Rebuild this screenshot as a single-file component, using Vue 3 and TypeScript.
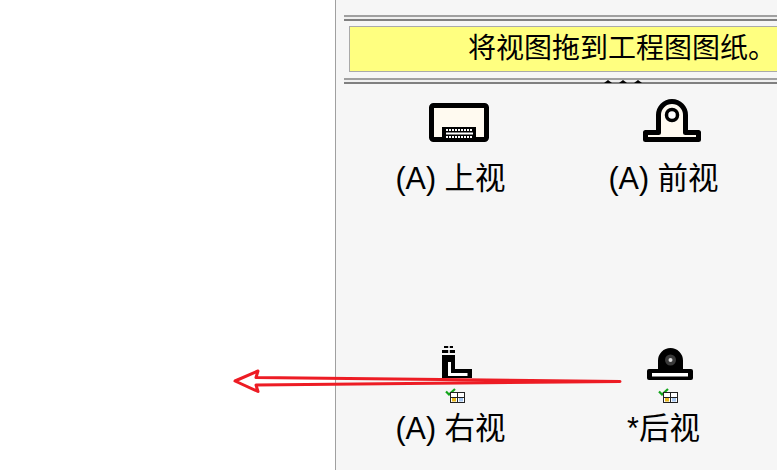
<script setup lang="ts">
interface ViewItem {
  label: string
  kind: 'top' | 'front' | 'right' | 'back'
  used: boolean
}

const views: ViewItem[] = [
  { label: '(A) 上视', kind: 'top', used: false },
  { label: '(A) 前视', kind: 'front', used: false },
  { label: '(A) 右视', kind: 'right', used: true },
  { label: '*后视', kind: 'back', used: true },
]
</script>

<template>
  <div class="page">
    <div class="blank"></div>
    <section class="panel">
      <div class="rule"></div>
      <div class="hint">将视图拖到工程图图纸。</div>
      <div class="rule rule--lower">
        <div class="grip">
          <i></i>
          <i></i>
          <i></i>
        </div>
      </div>
      <div class="view-grid">
        <div v-for="view in views" :key="view.label" class="view-cell">
          <div class="icon-box">
            <svg v-if="view.kind === 'top'" class="view-icon" width="60" height="44" viewBox="0 0 60 44">
              <rect x="3.500" y="6.500" width="55" height="34" rx="2" fill="#fffaf0" stroke="#000" stroke-width="5" />
              <rect x="14" y="28" width="34" height="15" fill="#000" />
              <path d="M18 31h27M18 38h27" stroke="#fff" stroke-width="2" stroke-dasharray="2 1" />
              <path d="M18 34.500h27" stroke="#fff" stroke-width="2" />
            </svg>
            <svg v-else-if="view.kind === 'front'" class="view-icon" width="60" height="44" viewBox="0 0 60 44">
              <path d="M4.500 40.500V33.500H17.500V16A13.500 13.500 0 0 1 44.500 16V33.500H57.500V40.500Z" fill="#fffaf0" stroke="#000" stroke-width="5" stroke-linejoin="round" />
              <circle cx="31" cy="16" r="5.500" fill="#fff" stroke="#000" stroke-width="3.500" />
            </svg>
            <svg v-else-if="view.kind === 'right'" class="view-icon" width="60" height="44" viewBox="0 0 60 44">
              <path d="M16 3h9v2h-9zM14 7h13v3H14z" fill="#000" />
              <path d="M21 3v7" stroke="#fff" stroke-width="1.500" />
              <path d="M14 12h13v14h17v9H14Z" fill="#000" />
              <path d="M21.500 19v12.500h18" fill="none" stroke="#fff" stroke-width="3" />
            </svg>
            <svg v-else class="view-icon" width="60" height="44" viewBox="0 0 60 44">
              <path d="M17 28V17.500A12.500 12.500 0 0 1 42 17.500V28Z" fill="#000" />
              <circle cx="29.500" cy="17" r="5.500" fill="#3a3a3a" />
              <circle cx="29.500" cy="17" r="2" fill="#ddd" />
              <rect x="6" y="26" width="46" height="11" rx="2" fill="#000" />
              <rect x="11" y="30" width="36" height="3.500" fill="#fff" />
            </svg>
          </div>
          <div class="badge-box" :class="{ 'badge-box--used': view.used }">
            <svg v-if="view.used" width="20" height="15" viewBox="0 0 20 15">
              <path d="M1 3.500l3 3 6-5.500" fill="none" stroke="#12a51a" stroke-width="2.200" />
              <rect x="5.500" y="4.500" width="14" height="10" fill="#fff" stroke="#222" />
              <path d="M5.500 9.500h14M12.500 4.500v10" stroke="#222" />
              <rect x="7" y="10" width="4" height="3.500" fill="#e8b820" />
              <rect x="14" y="10" width="4" height="3.500" fill="#a8c8f0" />
            </svg>
          </div>
          <div class="view-label">{{ view.label }}</div>
        </div>
      </div>
    </section>
    <svg class="arrow" width="777" height="470" viewBox="0 0 777 470">
      <path d="M235 381 258 371 256 377.500 620 381.500 256 385 258 391.500Z" fill="none" stroke="#ed1c24" stroke-width="3" stroke-linejoin="round" />
    </svg>
  </div>
</template>

<style>
html,
body {
  margin: 0;
  background: #fff;
}
</style>

<style scoped>
.page {
  position: relative;
  display: flex;
  width: 777px;
  height: 470px;
  overflow: hidden;
  font-family: 'Liberation Sans', 'Noto Sans CJK SC', sans-serif;
  color: #000;
}

.blank {
  flex: 0 0 335px;
  background: #fff;
}

.panel {
  flex: 1;
  min-width: 0;
  box-sizing: border-box;
  padding: 15px 0 0 8px;
  border-left: 1px solid #a0a0a0;
  background: #f6f6f6;
}

.rule {
  position: relative;
  height: 6px;
  border-top: 2px solid #a0a0a0;
  border-bottom: 2px solid #808080;
  box-sizing: border-box;
  background: #f0f0f0;
}

.rule--lower {
  margin-top: 6px;
}

.grip {
  position: absolute;
  top: 0;
  left: 260px;
  display: flex;
  gap: 7px;
}

.grip i {
  width: 0;
  height: 0;
  border-left: 4px solid transparent;
  border-right: 4px solid transparent;
  border-bottom: 3px solid #000;
}

.hint {
  box-sizing: border-box;
  height: 46px;
  margin: 5px 0 0 5px;
  padding-left: 118px;
  border: 1px solid #aaa;
  border-right: 0;
  background: #ffff80;
  font-size: 28px;
  line-height: 44px;
  white-space: nowrap;
}

.view-grid {
  display: grid;
  grid-template-columns: 213px 213px;
  grid-auto-rows: 244px;
  padding-top: 15px;
}

.view-cell {
  display: flex;
  flex-direction: column;
  align-items: center;
}

.icon-box {
  height: 44px;
  margin-left: 14px;
}

.view-icon {
  display: block;
  overflow: visible;
}

.badge-box {
  height: 10px;
}

.badge-box--used {
  height: 16px;
  margin-left: 8px;
}

.badge-box svg {
  display: block;
  margin-top: 1px;
}

.view-label {
  margin-top: 7px;
  font-size: 30.500px;
  line-height: 36px;
  white-space: nowrap;
}

.arrow {
  position: absolute;
  inset: 0;
  pointer-events: none;
}
</style>
